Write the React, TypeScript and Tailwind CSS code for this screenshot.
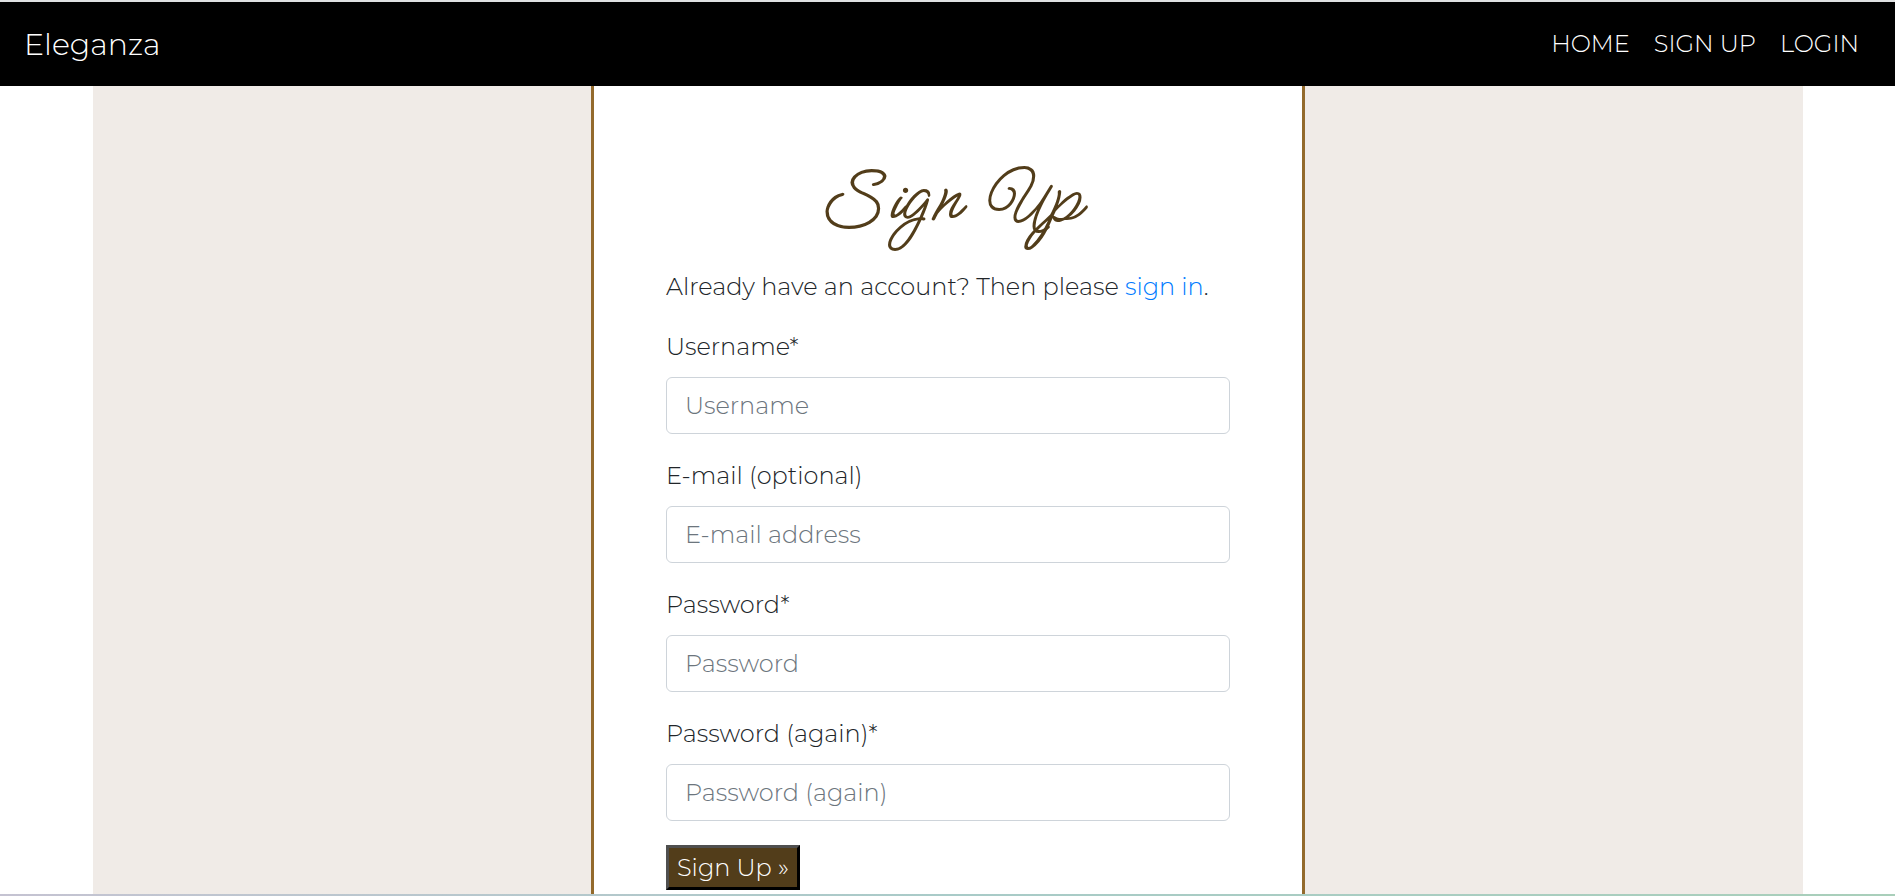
import React from "react";

type Field = { id: string; label: string; placeholder: string; type: string };

const fields: Field[] = [
  { id: "username", label: "Username*", placeholder: "Username", type: "text" },
  { id: "email", label: "E-mail (optional)", placeholder: "E-mail address", type: "email" },
  { id: "password1", label: "Password*", placeholder: "Password", type: "password" },
  { id: "password2", label: "Password (again)*", placeholder: "Password (again)", type: "password" },
];

const links = ["HOME", "SIGN UP", "LOGIN"];

function Navbar() {
  return (
    <header className="flex h-[86px] items-center justify-between border-t-2 border-[#dfe1e2] bg-black pl-6 pr-9 text-white">
      <a href="#home" className="pt-0.5 text-[30px] leading-[48px]">
        Eleganza
      </a>
      <nav className="flex gap-6">
        {links.map((link) => (
          <a key={link} href={"#" + link.toLowerCase().replace(" ", "-")}>
            {link}
          </a>
        ))}
      </nav>
    </header>
  );
}

function FormField({ id, label, placeholder, type }: Field) {
  return (
    <div className="flex flex-col gap-3">
      <label htmlFor={id}>{label}</label>
      <input
        id={id}
        name={id}
        type={type}
        placeholder={placeholder}
        className="h-[57px] w-full rounded-md border border-[#ced4da] bg-white px-[18px] placeholder:text-[#6c757d]"
      />
    </div>
  );
}

export default function App() {
  return (
    <div className="flex min-h-screen flex-col bg-white font-['Montserrat','Inter',sans-serif] text-[24px] leading-9 font-light text-[#212529]">
      <Navbar />
      <main className="mr-[92px] ml-[93px] flex flex-1 justify-center bg-[#f0ebe7]">
        <section className="w-full max-w-[714px] border-x-[3px] border-[#936a2c] bg-white px-[72px] pt-16 pb-1">
          <h1 className="mb-[19px] text-center font-['Meow_Script',cursive] text-[84px] leading-[100px] font-medium text-[#523d1a]">
            Sign Up
          </h1>
          <p className="mb-6">
            Already have an account? Then please{" "}
            <a href="#login" className="text-[#007bff]">
              sign in
            </a>
            .
          </p>
          <form className="flex flex-col items-stretch gap-6" onSubmit={(e) => e.preventDefault()}>
            {fields.map((field) => (
              <FormField key={field.id} {...field} />
            ))}
            <button
              type="submit"
              className="h-[45px] self-start border-[3px] border-t-[#4f4f4f] border-r-black border-b-black border-l-[#4f4f4f] bg-[#523d1a] px-2 text-white"
            >
              Sign Up »
            </button>
          </form>
        </section>
      </main>
      <footer className="h-0.5 bg-linear-to-r from-[#c5c3d2] via-[#a9cbc8] to-[#a9cfba]" />
    </div>
  );
}
